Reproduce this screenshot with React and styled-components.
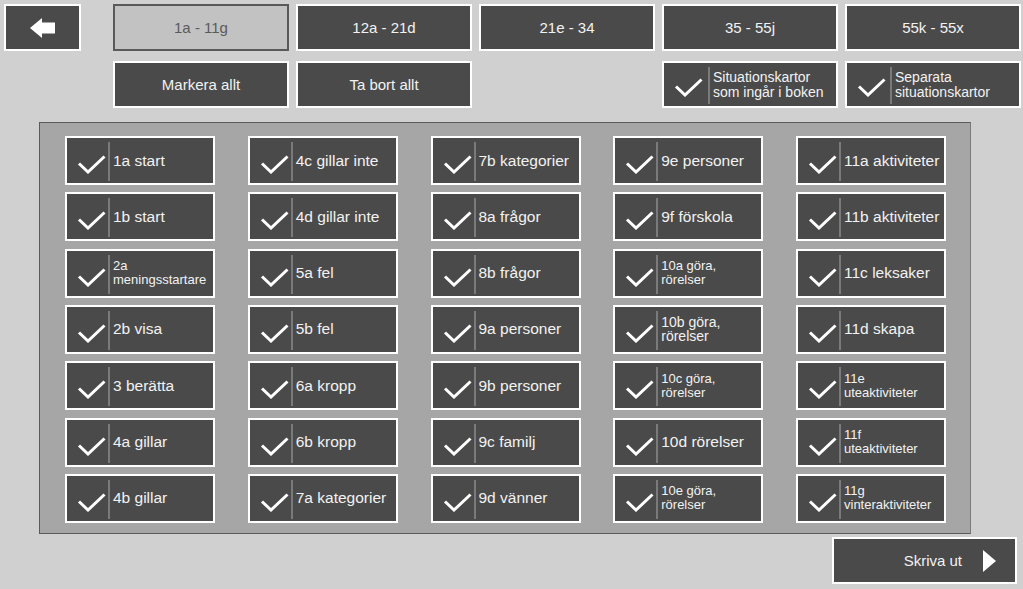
import React from 'react';
import styled, { createGlobalStyle } from 'styled-components';

const GlobalStyle = createGlobalStyle`
    html, body {
        margin: 0;
        padding: 0;
        background: #d0d0d0;
        overflow: hidden;
    }
    body {
        font-family: "Liberation Sans", Arial, sans-serif;
    }
`;

const Page = styled.div`
    width: 1023px;
    height: 589px;
    box-sizing: border-box;
    padding: 4px 0 0 4px;
    background: #d0d0d0;
`;

const TopGrid = styled.div`
    display: grid;
    grid-template-columns: 102px repeat(5, 176px);
    grid-auto-rows: 47px;
    column-gap: 7px;
    row-gap: 10px;
`;

const DarkButton = styled.button`
    box-sizing: border-box;
    height: 47px;
    margin: 0;
    padding: 0;
    border: 2px solid ${p => (p.$active ? '#595959' : '#ffffff')};
    background: ${p => (p.$active ? '#c2c2c2' : '#4a4a4a')};
    color: ${p => (p.$active ? '#5a5a5a' : '#f2f2f2')};
    font-family: "Liberation Sans", Arial, sans-serif;
    font-size: 15px;
    display: flex;
    align-items: center;
    justify-content: center;
    grid-column: ${p => p.$col || 'auto'};
`;

const BackButton = styled(DarkButton)`
    width: 77px;
`;

const OptionButton = styled(DarkButton)`
    justify-content: flex-start;
    align-items: stretch;
    grid-column: ${p => p.$col};
`;

const OptionCheck = styled.div`
    width: ${p => p.$w}px;
    display: flex;
    align-items: flex-end;
    padding: 0 0 9px 10px;
    box-sizing: border-box;
`;

const OptionText = styled.div`
    display: flex;
    align-items: center;
    padding-left: 3px;
    font-size: 14px;
    line-height: 15px;
    text-align: left;
    color: #f2f2f2;
`;

const Panel = styled.div`
    box-sizing: border-box;
    width: 932px;
    height: 412px;
    margin: 14px 0 0 35px;
    padding: 13px 0 0 25px;
    background: #a6a6a6;
    border: 1px solid #5a5a5a;
    border-right-color: #7a7a7a;
`;

const ItemGrid = styled.div`
    display: grid;
    grid-template-rows: repeat(7, 49px);
    grid-template-columns: repeat(5, 150px);
    grid-auto-flow: column;
    column-gap: 32.75px;
    row-gap: 7.33px;
`;

const Item = styled.div`
    box-sizing: border-box;
    display: flex;
    align-items: stretch;
    background: #4a4a4a;
    border: 2px solid #ffffff;
`;

const CheckArea = styled.div`
    width: 41px;
    flex: 0 0 41px;
    box-sizing: border-box;
    display: flex;
    align-items: flex-end;
    padding: 0 0 9px 10px;
`;

const Divider = styled.div`
    width: 2px;
    flex: 0 0 2px;
    margin: 4px 0 2px;
    background: #7a7a7a;
`;

const Label = styled.div`
    display: flex;
    align-items: center;
    padding-left: 3px;
    color: #f2f2f2;
    font-size: ${p => p.$size}px;
    line-height: ${p => (p.$size < 15 ? '14px' : '18px')};
    white-space: nowrap;
`;

const Footer = styled.div`
    display: flex;
    justify-content: flex-end;
    padding: 3px 6px 0 0;
`;

const PrintButton = styled(DarkButton)`
    width: 185px;
    justify-content: flex-end;
    padding-right: 19px;
    gap: 21px;
`;

const Check = () => (
    <svg width="29" height="19" viewBox="0 0 29 19">
        <path d="M2 8.5 L11 17 L27.5 1.5" fill="none" stroke="#ffffff" strokeWidth="3" />
    </svg>
);

const items = [
    '1a start', '1b start', '2a\nmeningsstartare', '2b visa', '3 berätta', '4a gillar', '4b gillar',
    '4c gillar inte', '4d gillar inte', '5a fel', '5b fel', '6a kropp', '6b kropp', '7a kategorier',
    '7b kategorier', '8a frågor', '8b frågor', '9a personer', '9b personer', '9c familj', '9d vänner',
    '9e personer', '9f förskola', '10a göra,\nrörelser', '10b göra,\nrörelser', '10c göra,\nrörelser', '10d rörelser', '10e göra,\nrörelser',
    '11a aktiviteter', '11b aktiviteter', '11c leksaker', '11d skapa', '11e\nuteaktiviteter', '11f\nuteaktiviteter', '11g\nvinteraktiviteter',
];

const tabs = ['1a - 11g', '12a - 21d', '21e - 34', '35 - 55j', '55k - 55x'];

const renderLines = text =>
    text.split('\n').map((line, i) => (
        <React.Fragment key={i}>
            {i > 0 && <br />}
            {line}
        </React.Fragment>
    ));

const labelSize = text => {
    if (text.startsWith('10b')) return 14;
    if (text.includes('\n')) return 13;
    return 15.5;
};

export default () => (
    <Page>
        <GlobalStyle />
        <TopGrid>
            <BackButton>
                <svg width="26" height="20" viewBox="0 0 26 20">
                    <polygon points="0,10 12,0 12,4.5 25,4.5 25,15.5 12,15.5 12,20" fill="#ffffff" />
                </svg>
            </BackButton>
            {tabs.map((tab, i) => (
                <DarkButton key={tab} $active={i === 0}>{tab}</DarkButton>
            ))}

            <DarkButton $col="2">Markera allt</DarkButton>
            <DarkButton $col="3">Ta bort allt</DarkButton>
            <OptionButton $col="5">
                <OptionCheck $w={44}><Check /></OptionCheck>
                <Divider />
                <OptionText>Situationskartor<br />som ingår i boken</OptionText>
            </OptionButton>
            <OptionButton $col="6">
                <OptionCheck $w={43}><Check /></OptionCheck>
                <Divider />
                <OptionText>Separata<br />situationskartor</OptionText>
            </OptionButton>
        </TopGrid>

        <Panel>
            <ItemGrid>
                {items.map(item => (
                    <Item key={item}>
                        <CheckArea><Check /></CheckArea>
                        <Divider />
                        <Label $size={labelSize(item)}>{renderLines(item)}</Label>
                    </Item>
                ))}
            </ItemGrid>
        </Panel>

        <Footer>
            <PrintButton>
                <span>Skriva ut</span>
                <svg width="13" height="22" viewBox="0 0 13 22">
                    <polygon points="0,0 13,11 0,22" fill="#ffffff" />
                </svg>
            </PrintButton>
        </Footer>
    </Page>
);
